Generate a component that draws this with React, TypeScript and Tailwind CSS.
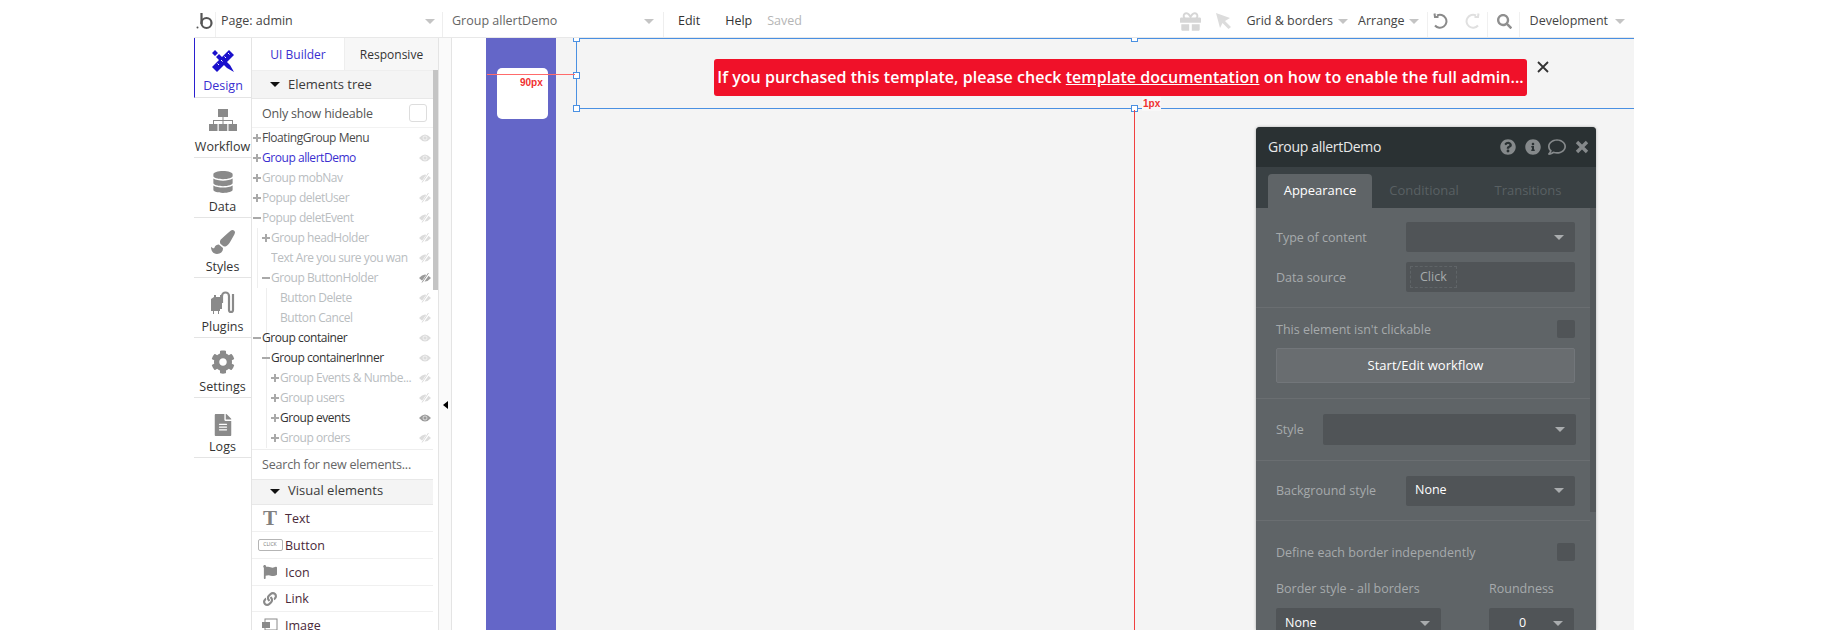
import { ReactNode } from 'react';
import {
  FaCog,
  FaDatabase,
  FaFileAlt,
  FaFlag,
  FaGift,
  FaInfoCircle,
  FaLink,
  FaPaintBrush,
  FaQuestionCircle,
  FaRegComment,
  FaSearch,
} from 'react-icons/fa';

const sideTabs = [
  { label: 'Design', icon: <DesignIcon />, active: true },
  { label: 'Workflow', icon: <WorkflowIcon /> },
  { label: 'Data', icon: <FaDatabase size={22} /> },
  { label: 'Styles', icon: <FaPaintBrush size={24} /> },
  { label: 'Plugins', icon: <PlugIcon /> },
  { label: 'Settings', icon: <FaCog size={24} /> },
  { label: 'Logs', icon: <FaFileAlt size={22} className="mt-[5px]" /> },
];

type TreeRow = {
  name: string;
  depth: number;
  mark?: '+' | '-';
  color: string;
  eye: 'on' | 'off' | 'onDark' | 'offDark';
};

const black = 'text-[#333333]';
const faded = 'text-[#b9bdbf]';

const treeRows: TreeRow[] = [
  { name: 'FloatingGroup Menu', depth: 0, mark: '+', color: 'text-[#4a4a4a]', eye: 'on' },
  { name: 'Group allertDemo', depth: 0, mark: '+', color: 'text-[#3a2fd0]', eye: 'on' },
  { name: 'Group mobNav', depth: 0, mark: '+', color: faded, eye: 'off' },
  { name: 'Popup deletUser', depth: 0, mark: '+', color: faded, eye: 'off' },
  { name: 'Popup deletEvent', depth: 0, mark: '-', color: faded, eye: 'off' },
  { name: 'Group headHolder', depth: 1, mark: '+', color: faded, eye: 'off' },
  { name: 'Text Are you sure you wan', depth: 1, color: faded, eye: 'off' },
  { name: 'Group ButtonHolder', depth: 1, mark: '-', color: faded, eye: 'offDark' },
  { name: 'Button Delete', depth: 2, color: faded, eye: 'off' },
  { name: 'Button Cancel', depth: 2, color: faded, eye: 'off' },
  { name: 'Group container', depth: 0, mark: '-', color: black, eye: 'on' },
  { name: 'Group containerInner', depth: 1, mark: '-', color: black, eye: 'on' },
  { name: 'Group Events & Numbe...', depth: 2, mark: '+', color: faded, eye: 'off' },
  { name: 'Group users', depth: 2, mark: '+', color: faded, eye: 'off' },
  { name: 'Group events', depth: 2, mark: '+', color: black, eye: 'onDark' },
  { name: 'Group orders', depth: 2, mark: '+', color: faded, eye: 'off' },
];

function DesignIcon() {
  return (
    <svg width="24" height="24" viewBox="0 0 24 24" fill="#1a10cc">
      <path d="M18 1l5 5L6 23l-5-5z" />
      <path d="M4 1L1 4l3 3 3-3zM8 5L5 8l11 11 7 4-4-7z" />
      <path d="M17 4l1.500 1.500M13.500 7.500L15 9M10 11l1.500 1.500M6.500 14.500L8 16" stroke="#ffffff" strokeWidth="1" />
    </svg>
  );
}

function WorkflowIcon() {
  return (
    <svg width="28" height="24" viewBox="0 0 28 24" fill="#8a8a8a" className="mt-[-5px]">
      <rect x="9" y="1" width="10" height="8" />
      <rect x="13.500" y="9" width="1" height="7" />
      <rect x="4" y="12" width="20" height="1" />
      <rect x="4" y="12" width="1" height="4" />
      <rect x="23" y="12" width="1" height="4" />
      <rect x="0" y="16" width="8.500" height="7" />
      <rect x="9.750" y="16" width="8.500" height="7" />
      <rect x="19.500" y="16" width="8.500" height="7" />
    </svg>
  );
}

function PlugIcon() {
  return (
    <svg width="26" height="26" viewBox="0 0 26 26" fill="none">
      <path d="M1 10l3-2v-2h2v2h4v-2h2v14h-2v2h-1v3H8v-3H4v3H3v-3H1z" fill="#8a8a8a" />
      <path d="M12 14V7a3.500 3.500 0 0 1 7 0v14a2 2 0 0 0 4 0V5" stroke="#8a8a8a" strokeWidth="2.200" />
    </svg>
  );
}

function EyeIcon({ off, color }: { off: boolean; color: string }) {
  return (
    <svg width="12" height="10" viewBox="0 0 12 10" className="mr-[2px] shrink-0">
      <path d="M0 5Q6 -2 12 5Q6 12 0 5Z" fill={color} />
      {off ? (
        <>
          <path d="M10 0L3 10" stroke="#ffffff" strokeWidth="2.400" />
          <path d="M9.500 0L3 9.500" stroke={color} strokeWidth="1" />
        </>
      ) : (
        <circle cx="6" cy="5" r="2" fill="none" stroke="#ffffff" strokeWidth="0.600" />
      )}
    </svg>
  );
}

function Caret({ className = 'border-t-[#c4c4c4]' }: { className?: string }) {
  return <span className={`inline-block h-0 w-0 border-x-[5px] border-t-[5px] border-x-transparent ${className}`} />;
}

function TreeItem({ row }: { row: TreeRow }) {
  const eyeColor = row.eye === 'onDark' || row.eye === 'offDark' ? '#9b9b9b' : '#dcdcdc';
  const indent = row.depth === 0 ? 'pl-0' : row.depth === 1 ? 'pl-[9px]' : 'pl-[18px]';
  return (
    <div className={`flex h-5 items-center ${indent}`}>
      <span className="flex w-[10px] shrink-0 items-center justify-center">
        {row.mark === '+' && (
          <svg width="8" height="8" viewBox="0 0 8 8" fill="#a9a9a9">
            <path d="M3 0h2v3h3v2H5v3H3V5H0V3h3z" />
          </svg>
        )}
        {row.mark === '-' && <span className="h-[2px] w-[8px] bg-[#a9a9a9]" />}
      </span>
      <span className={`flex-1 truncate text-[12px] tracking-[-0.45px] ${row.color}`}>{row.name}</span>
      <EyeIcon off={row.eye === 'off' || row.eye === 'offDark'} color={eyeColor} />
    </div>
  );
}

function PaletteItem({ icon, label, className }: { icon: ReactNode; label: string; className: string }) {
  return (
    <div className={`flex items-center border-b border-[#f0f0f0] ${className}`}>
      <span className="flex w-[33px] shrink-0 items-center justify-center pl-[3px]">{icon}</span>
      <span className="pt-[2px] text-[12.5px] text-[#4a2a3a]">{label}</span>
    </div>
  );
}

function SectionHeader({ label, className }: { label: string; className: string }) {
  return (
    <div className={`flex items-center bg-[#f4f4f4] pl-[18px] ${className}`}>
      <Caret className="border-t-[#111111]" />
      <span className="ml-[8px] text-[13px] text-[#3a3a3a]">{label}</span>
    </div>
  );
}

function DarkSelect({ value, className }: { value?: string; className: string }) {
  return (
    <div className={`flex items-center justify-between rounded-[2px] bg-[#505457] pl-[9px] pr-[11px] ${className}`}>
      <span className="text-[12.5px] text-white">{value}</span>
      <Caret className="border-t-[#a9acae]" />
    </div>
  );
}

function PropertyEditor() {
  const label = 'pt-[2px] text-[12.5px] text-[#a6aaac]';
  return (
    <div className="absolute left-[804px] top-[89px] flex h-[503px] w-[340px] flex-col overflow-hidden rounded-t-[4px] bg-[#5f6467] shadow-[0_0_3px_rgba(0,0,0,0.3)]">
      <div className="flex h-[40px] shrink-0 items-center bg-[#2a3133] pl-[12px] pr-[6px]">
        <span className="flex-1 pb-[2px] text-[14px] tracking-[-0.3px] text-[#e8e9e9]">Group allertDemo</span>
        <FaQuestionCircle size={16} className="text-[#85898b]" />
        <FaInfoCircle size={16} className="ml-[9px] text-[#85898b]" />
        <FaRegComment size={18} className="ml-[7px] text-[#85898b]" />
        <svg width="14" height="14" viewBox="0 0 14 14" stroke="#85898b" strokeWidth="3.400" className="ml-[9px] mr-[1px]">
          <path d="M2 2l10 10M12 2L2 12" />
        </svg>
      </div>
      <div className="flex h-[41px] shrink-0 items-end bg-[#3a4144] pl-[12px]">
        <div className="flex h-[34px] w-[104px] items-center justify-center rounded-t-[4px] bg-[#5f6467] text-[13px] text-white">Appearance</div>
        <div className="flex h-[34px] w-[104px] items-center justify-center text-[13px] text-[#596063]">Conditional</div>
        <div className="flex h-[34px] w-[104px] items-center justify-center text-[13px] text-[#596063]">Transitions</div>
      </div>
      <div className="relative flex-1">
        <span className="absolute right-0 top-0 h-[304px] w-[6px] bg-[#54585b]" />
        <div className="mr-[6px] flex h-[100px] flex-col gap-[10px] border-b border-[#6a6e71] pl-[20px] pr-[15px] pt-[14px]">
          <div className="flex h-[30px] items-center justify-between">
            <span className={label}>Type of content</span>
            <DarkSelect className="h-[30px] w-[169px]" />
          </div>
          <div className="flex h-[30px] items-center justify-between">
            <span className={label}>Data source</span>
            <div className="flex h-[30px] w-[169px] items-center rounded-[2px] bg-[#505457] pl-[4px]">
              <span className="border border-dashed border-[#5f6467] px-[9px] py-[1px] text-[12.5px] text-[#a6aaac]">Click</span>
            </div>
          </div>
        </div>
        <div className="mr-[6px] h-[91px] border-b border-[#6a6e71] pl-[20px] pr-[15px] pt-[12px]">
          <div className="flex h-[18px] items-center justify-between">
            <span className={label}>This element isn't clickable</span>
            <span className="h-[18px] w-[18px] rounded-[2px] bg-[#505457]" />
          </div>
          <div className="mt-[10px] flex h-[35px] items-center justify-center rounded-[2px] border border-[#72767a] bg-[#696d70] text-[13px] text-white">
            Start/Edit workflow
          </div>
        </div>
        <div className="mr-[6px] flex h-[62px] items-center gap-[19px] border-b border-[#6a6e71] pl-[20px] pr-[14px]">
          <span className={label}>Style</span>
          <DarkSelect className="h-[31px] flex-1" />
        </div>
        <div className="mr-[6px] flex h-[60px] items-center justify-between border-b border-[#6a6e71] pl-[20px] pr-[15px]">
          <span className={label}>Background style</span>
          <DarkSelect value="None" className="h-[30px] w-[169px]" />
        </div>
        <div className="mr-[6px] pl-[20px] pr-[15px] pt-[22px]">
          <div className="flex h-[18px] items-center justify-between">
            <span className={label}>Define each border independently</span>
            <span className="h-[18px] w-[18px] rounded-[2px] bg-[#505457]" />
          </div>
          <div className="mt-[17px] flex">
            <div className="w-[213px]">
              <div className={label}>Border style - all borders</div>
              <DarkSelect value="None" className="mt-[9px] h-[32px] w-[165px]" />
            </div>
            <div className="flex-1">
              <div className={label}>Roundness</div>
              <div className="mt-[9px] flex h-[32px] w-[85px] items-center rounded-[2px] bg-[#505457] pl-[30px]">
                <span className="w-[34px] text-[12.5px] text-white">0</span>
                <Caret className="border-t-[#a9acae]" />
              </div>
            </div>
          </div>
        </div>
      </div>
    </div>
  );
}

function Canvas() {
  const handle = 'absolute h-[7px] w-[7px] border border-[#4a90e2] bg-white';
  return (
    <div className="relative flex-1 overflow-hidden bg-white">
      {/* purple nav column */}
      <div className="absolute bottom-0 left-[34px] top-0 w-[70px] bg-[#6466c8]" />
      <div className="absolute bottom-0 left-[104px] right-0 top-0 bg-[#f4f4f4]" />
      <div className="absolute left-[45px] top-[30px] h-[51px] w-[51px] rounded-[5px] bg-white" />

      {/* selected group */}
      <div className="absolute left-[124px] top-0 h-[71px] w-[1100px] border border-[#4a90e2]" />
      <div className={`${handle} left-[121px] top-[-3px]`} />
      <div className={`${handle} left-[121px] top-[34px]`} />
      <div className={`${handle} left-[121px] top-[67px]`} />
      <div className={`${handle} left-[679px] top-[-3px]`} />
      <div className={`${handle} left-[679px] top-[67px]`} />

      {/* alert */}
      <div className="absolute left-[262px] top-[21px] flex h-[37px] w-[813px] items-center justify-center rounded-[3px] bg-[#f01129] pb-[2px] text-[16px] tracking-[0.03px] font-semibold whitespace-nowrap text-white">
        <span>
          If you purchased this template, please check <span className="underline">template documentation</span> on how to enable the full admin...
        </span>
      </div>
      <svg width="12" height="12" viewBox="0 0 12 12" stroke="#333333" strokeWidth="1.800" className="absolute left-[1085px] top-[23px]">
        <path d="M1 1l10 10M11 1L1 11" />
      </svg>

      {/* distance guides */}
      <div className="absolute left-[35px] top-[36px] h-[1px] w-[88px] bg-[#ff6b6b]" />
      <span className="absolute left-[68px] top-[37px] font-['Liberation_Sans',sans-serif] text-[10px] font-bold text-[#f03030]">90px</span>
      <div className="absolute bottom-0 left-[682px] top-[72px] w-[1px] bg-[#f04040]" />
      <span className="absolute left-[690px] top-[59px] bg-[#f8f8f8] px-[1px] font-['Liberation_Sans',sans-serif] text-[10px] leading-[14px] font-bold text-[#f03030]">1px</span>

      <PropertyEditor />
    </div>
  );
}

export default function App() {
  return (
    <div className="h-[644px] w-full overflow-hidden bg-white font-['Open_Sans','Noto_Sans',sans-serif]">
      <div className="ml-[194px] flex h-[630px] w-[1440px] flex-col">
        {/* top bar */}
        <header className="flex h-[38px] shrink-0 border-b border-[#e8e8e8] pt-[12px]">
          <div className="flex w-[22px] items-center justify-center border-r border-[#f0f0f0] pb-[7px]">
            <svg width="18" height="18" viewBox="0 0 18 18" fill="none" stroke="#555555" strokeWidth="2.200">
              <path d="M5.500 1v11" />
              <circle cx="10.500" cy="11" r="5" />
              <circle cx="1.500" cy="15.500" r="1" fill="#555555" stroke="none" />
            </svg>
          </div>
          <div className="flex w-[227px] items-center justify-between border-r border-[#eeeeee] pb-[7px] pl-[5px] pr-[7px]">
            <span className="text-[12.5px] text-[#444444]">Page: admin</span>
            <Caret />
          </div>
          <div className="flex w-[221px] items-center justify-between border-r border-[#eeeeee] pb-[7px] pl-[9px] pr-[9px]">
            <span className="text-[12.5px] text-[#666666]">Group allertDemo</span>
            <Caret />
          </div>
          <div className="flex flex-1 items-center pb-[7px]">
            <span className="ml-[14px] text-[12.5px] text-[#333333]">Edit</span>
            <span className="ml-[25px] text-[12.5px] text-[#333333]">Help</span>
            <span className="ml-[15px] text-[12.5px] text-[#b5b5b5]">Saved</span>
            <div className="flex-1" />
            <FaGift size={21} className="text-[#d6d6d6]" />
            <svg width="16" height="16" viewBox="0 0 16 16" fill="#dcdcdc" className="ml-[14px]">
              <path d="M1 0l14 5-5 3 6 6-2.500 2-6-6-2.500 5z" />
            </svg>
            <span className="ml-[15px] text-[12.5px] text-[#444444]">Grid &amp; borders</span>
            <span className="ml-[5px] flex"><Caret /></span>
            <span className="ml-[10px] text-[12.5px] text-[#444444]">Arrange</span>
            <span className="ml-[4px] mr-[8px] flex"><Caret /></span>
          </div>
          <div className="flex w-[61px] items-center gap-[15px] border-x border-[#f0f0f0] pb-[7px] pl-[5px]">
            <svg width="16" height="16" viewBox="0 0 16 16" fill="none" stroke="#8a8a8a" strokeWidth="2">
              <path d="M4 2.500a6.500 6.500 0 1 1-2 10" />
              <path d="M1.500 0.500l0.500 3.500h3.500" />
            </svg>
            <svg width="16" height="16" viewBox="0 0 16 16" fill="none" stroke="#e0e0e0" strokeWidth="2">
              <path d="M12 2.500a6.500 6.500 0 1 0 2 10" />
              <path d="M14.500 0.500l-0.500 3.500h-3.500" />
            </svg>
          </div>
          <div className="flex w-[32px] items-center justify-center border-r border-[#f0f0f0] pb-[7px] pl-[2px]">
            <FaSearch size={15} className="text-[#8f8f8f]" />
          </div>
          <div className="flex items-center pb-[7px]">
            <span className="ml-[10px] text-[12.5px] text-[#444444]">Development</span>
            <span className="ml-[7px] mr-[9px] flex"><Caret /></span>
          </div>
        </header>

        <div className="flex min-h-0 flex-1">
          {/* left tabs */}
          <nav className="flex w-[58px] shrink-0 flex-col border-r border-[#e4e4e4]">
            {sideTabs.map((tab) => (
              <div
                key={tab.label}
                className={`flex h-[60px] flex-col items-center justify-end border-b border-[#e4e4e4] ${tab.active ? 'border-l border-l-[#2a1fd0] pb-[1px]' : 'text-[#8a8a8a]'}`}
              >
                <div className="flex h-[32px] items-center justify-center">{tab.icon}</div>
                <span className={`text-[12.5px] ${tab.active ? 'text-[#3a2fd0]' : 'text-[#333333]'}`}>{tab.label}</span>
              </div>
            ))}
          </nav>

          {/* elements panel */}
          <aside className="relative flex w-[187px] shrink-0 flex-col overflow-hidden border-r border-[#e4e4e4]">
            <div className="flex h-[33px] shrink-0 border-b border-[#eeeeee]">
              <div className="flex w-[92px] items-center justify-center pt-[2px] text-[12px] text-[#3a2fd0]">UI Builder</div>
              <div className="flex flex-1 items-center justify-center border-l border-[#eeeeee] bg-[#f7f7f7] pt-[2px] text-[12px] text-[#333333]">Responsive</div>
            </div>
            <div className="mr-[5px] flex min-h-0 flex-1 flex-col">
              <SectionHeader label="Elements tree" className="h-[28px] shrink-0 border-b border-[#e8e8e8]" />
              <div className="flex h-[29px] shrink-0 items-center justify-between border-b border-[#f2f2f2] pl-[10px] pr-[6px]">
                <span className="pt-[2px] text-[12.5px] tracking-[-0.2px] text-[#555555]">Only show hideable</span>
                <span className="h-[18px] w-[18px] rounded-[3px] border border-[#dddddd]" />
              </div>
              <div className="relative h-[322px] shrink-0 border-b border-[#eeeeee]">
                <div className="absolute left-[5px] top-[100px] h-[60px] w-[1px] bg-[#eeeeee]" />
                <div className="absolute left-[14px] top-[160px] h-[160px] w-[1px] bg-[#eeeeee]" />
                <div className="relative">
                  {treeRows.map((row) => (
                    <TreeItem key={row.name} row={row} />
                  ))}
                </div>
              </div>
              <div className="flex h-[29px] shrink-0 items-center pl-[10px] pt-[2px] text-[12.5px] tracking-[-0.2px] text-[#666666]">Search for new elements...</div>
              <SectionHeader label="Visual elements" className="h-[26px] shrink-0 border-y border-[#e8e8e8] pb-[2px]" />
              <PaletteItem label="Text" className="h-[27px] shrink-0" icon={<span className="font-['Liberation_Serif',serif] text-[21px] leading-none font-bold text-[#808080]">T</span>} />
              <PaletteItem label="Button" className="h-[27px] shrink-0" icon={<span className="flex h-[12px] w-[25px] items-center justify-center rounded-[2px] border border-[#b5b5b5] text-[5px] text-[#777777]">CLICK</span>} />
              <PaletteItem label="Icon" className="h-[27px] shrink-0" icon={<FaFlag size={14} className="text-[#8a8a8a]" />} />
              <PaletteItem label="Link" className="h-[26px] shrink-0" icon={<FaLink size={14} className="text-[#8a8a8a]" />} />
              <PaletteItem
                label="Image"
                className="h-[27px] shrink-0"
                icon={
                  <svg width="16" height="14" viewBox="0 0 16 14" fill="none">
                    <rect x="3" y="1" width="12" height="11" stroke="#8a8a8a" />
                    <rect x="0" y="4" width="8" height="6" fill="#8a8a8a" />
                  </svg>
                }
              />
            </div>
            <span className="absolute right-0 top-[32px] h-[220px] w-[5px] bg-[#c4c4c4]" />
          </aside>

          {/* collapse gutter */}
          <div className="flex w-[13px] shrink-0 items-start justify-center border-r border-[#e4e4e4] bg-[#fafafa] pt-[363px]">
            <span className="h-0 w-0 border-y-[4px] border-r-[5px] border-y-transparent border-r-black" />
          </div>

          <Canvas />
        </div>
      </div>
    </div>
  );
}
